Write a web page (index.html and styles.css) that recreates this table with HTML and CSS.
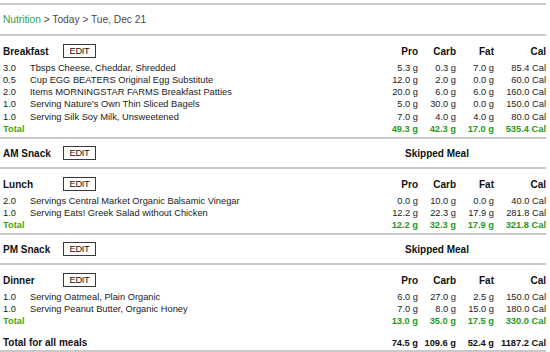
FILE: index.html
```html
<!DOCTYPE html>
<html>
<head>
<meta charset="utf-8">
<link rel="stylesheet" href="styles.css">
</head>
<body>
<div class="page">
  <div class="rule rule-top"></div>
  <div class="crumbs"><span class="crumb-home">Nutrition</span> &gt; Today &gt; Tue, Dec 21</div>
  <div class="rule"></div>

  <section class="meal">
    <div class="meal-head">
      <span class="meal-name">Breakfast</span><span class="edit">EDIT</span>
      <span class="spacer"></span>
      <span class="col">Pro</span><span class="col">Carb</span><span class="col">Fat</span><span class="col cal">Cal</span>
    </div>
    <div class="row"><span class="qty">3.0</span><span class="name">Tbsps Cheese, Cheddar, Shredded</span><span class="col">5.3 g</span><span class="col">0.3 g</span><span class="col">7.0 g</span><span class="col cal">85.4 Cal</span></div>
    <div class="row"><span class="qty">0.5</span><span class="name">Cup EGG BEATERS Original Egg Substitute</span><span class="col">12.0 g</span><span class="col">2.0 g</span><span class="col">0.0 g</span><span class="col cal">60.0 Cal</span></div>
    <div class="row"><span class="qty">2.0</span><span class="name">Items MORNINGSTAR FARMS Breakfast Patties</span><span class="col">20.0 g</span><span class="col">6.0 g</span><span class="col">6.0 g</span><span class="col cal">160.0 Cal</span></div>
    <div class="row"><span class="qty">1.0</span><span class="name">Serving Nature's Own Thin Sliced Bagels</span><span class="col">5.0 g</span><span class="col">30.0 g</span><span class="col">0.0 g</span><span class="col cal">150.0 Cal</span></div>
    <div class="row"><span class="qty">1.0</span><span class="name">Serving Silk Soy Milk, Unsweetened</span><span class="col">7.0 g</span><span class="col">4.0 g</span><span class="col">4.0 g</span><span class="col cal">80.0 Cal</span></div>
    <div class="row total"><span class="total-label">Total</span><span class="col">49.3 g</span><span class="col">42.3 g</span><span class="col">17.0 g</span><span class="col cal">535.4 Cal</span></div>
  </section>
  <div class="rule"></div>

  <section class="meal skipped">
    <div class="meal-head">
      <span class="meal-name">AM Snack</span><span class="edit">EDIT</span>
      <span class="spacer"></span>
      <span class="skip-note">Skipped Meal</span>
    </div>
  </section>
  <div class="rule"></div>

  <section class="meal">
    <div class="meal-head">
      <span class="meal-name">Lunch</span><span class="edit">EDIT</span>
      <span class="spacer"></span>
      <span class="col">Pro</span><span class="col">Carb</span><span class="col">Fat</span><span class="col cal">Cal</span>
    </div>
    <div class="row"><span class="qty">2.0</span><span class="name">Servings Central Market Organic Balsamic Vinegar</span><span class="col">0.0 g</span><span class="col">10.0 g</span><span class="col">0.0 g</span><span class="col cal">40.0 Cal</span></div>
    <div class="row"><span class="qty">1.0</span><span class="name">Serving Eats! Greek Salad without Chicken</span><span class="col">12.2 g</span><span class="col">22.3 g</span><span class="col">17.9 g</span><span class="col cal">281.8 Cal</span></div>
    <div class="row total"><span class="total-label">Total</span><span class="col">12.2 g</span><span class="col">32.3 g</span><span class="col">17.9 g</span><span class="col cal">321.8 Cal</span></div>
  </section>
  <div class="rule"></div>

  <section class="meal skipped">
    <div class="meal-head">
      <span class="meal-name">PM Snack</span><span class="edit">EDIT</span>
      <span class="spacer"></span>
      <span class="skip-note">Skipped Meal</span>
    </div>
  </section>
  <div class="rule"></div>

  <section class="meal">
    <div class="meal-head">
      <span class="meal-name">Dinner</span><span class="edit">EDIT</span>
      <span class="spacer"></span>
      <span class="col">Pro</span><span class="col">Carb</span><span class="col">Fat</span><span class="col cal">Cal</span>
    </div>
    <div class="row"><span class="qty">1.0</span><span class="name">Serving Oatmeal, Plain Organic</span><span class="col">6.0 g</span><span class="col">27.0 g</span><span class="col">2.5 g</span><span class="col cal">150.0 Cal</span></div>
    <div class="row"><span class="qty">1.0</span><span class="name">Serving Peanut Butter, Organic Honey</span><span class="col">7.0 g</span><span class="col">8.0 g</span><span class="col">15.0 g</span><span class="col cal">180.0 Cal</span></div>
    <div class="row total"><span class="total-label">Total</span><span class="col">13.0 g</span><span class="col">35.0 g</span><span class="col">17.5 g</span><span class="col cal">330.0 Cal</span></div>
  </section>

  <div class="row grand"><span class="grand-label">Total for all meals</span><span class="col">74.5 g</span><span class="col">109.6 g</span><span class="col">52.4 g</span><span class="col cal">1187.2 Cal</span></div>
  <div class="rule"></div>
</div>
</body>
</html>
```

FILE: styles.css
```css
html, body {
  margin: 0;
  padding: 0;
  background: #fff;
}

body {
  font-family: "Liberation Sans", Arial, sans-serif;
  color: #222;
}

.page {
  width: 546px;
}

.rule {
  height: 2px;
  background: #c9c9c9;
}

.rule-top {
  margin-top: 3px;
}

.crumbs {
  height: 29px;
  line-height: 29px;
  padding-left: 3px;
  font-size: 10.2px;
  color: #4a4a4a;
}

.crumb-home {
  color: #2f9e5a;
}

.meal {
  padding-bottom: 2px;
}

.meal-head {
  display: flex;
  align-items: center;
  height: 14px;
  padding: 8px 0 3.5px 3px;
  font-size: 10px;
  font-weight: bold;
  color: #111;
}

.skipped {
  padding-bottom: 0;
}

.skipped .meal-head {
  padding: 7px 0 7px 3px;
}

.meal-name {
  width: 60px;
  flex: none;
}

.edit {
  display: inline-flex;
  align-items: center;
  justify-content: center;
  box-sizing: border-box;
  width: 33px;
  height: 14px;
  border: 1px solid #3a3a3a;
  font-size: 9.3px;
  font-weight: normal;
  color: #111;
  letter-spacing: -0.3px;
}

.spacer {
  flex: 1;
}

.skip-note {
  width: 114px;
  margin-right: 52px;
  text-align: center;
}

.row {
  display: flex;
  height: 12.26px;
  line-height: 12.26px;
  padding-left: 3px;
  font-size: 9.3px;
  white-space: nowrap;
}

.qty {
  width: 27px;
  flex: none;
}

.name {
  flex: 1;
  overflow: hidden;
}

.col {
  width: 38px;
  flex: none;
  text-align: right;
}

.col.cal {
  width: 52px;
}

.total {
  color: #1f9a1f;
  font-weight: bold;
}

.total-label {
  flex: 1;
  color: #46a30a;
}

.grand {
  margin-top: 7.2px;
  margin-bottom: 1px;
  color: #111;
  font-weight: bold;
}

.grand-label {
  flex: 1;
  font-size: 10px;
}
```
